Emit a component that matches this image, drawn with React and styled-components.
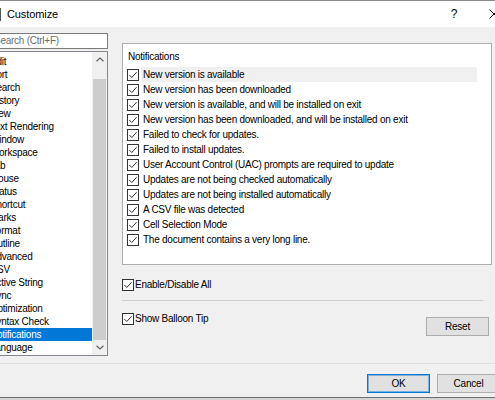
import styled, { createGlobalStyle } from "styled-components";
import React from "react";

const UI_FONT = `"Liberation Sans", Arial, sans-serif`;

const GlobalStyle = createGlobalStyle`
  html, body {
    margin: 0;
    padding: 0;
    background: #d4d4d4;
  }
`;

const Page = styled.div`
  width: 495px;
  height: 400px;
  overflow: hidden;
  font-family: ${UI_FONT};
  font-size: 10px;
  letter-spacing: -0.25px;
  color: #000;
`;

const Window = styled.div`
  width: 534px;
  margin-left: -20px;
  background: #f0f0f0;
  border-top: 1px solid #8c8c8c;
  border-bottom: 1px solid #6e6e6e;
  display: flex;
  flex-direction: column;
`;

const TitleBar = styled.div`
  height: 26px;
  background: #fff;
  display: flex;
  align-items: center;
  padding-left: 9px;
`;

const AppIcon = styled.svg`
  width: 12px;
  height: 13px;
  flex: none;
`;

const Title = styled.span`
  margin-left: 6px;
  font-size: 11px;
  letter-spacing: -0.1px;
  flex: 1;
`;

const CaptionButton = styled.div`
  width: 40px;
  height: 26px;
  display: flex;
  align-items: center;
  justify-content: center;
  font-size: 12px;
`;

const Body = styled.div`
  height: 336px;
  display: flex;
  padding: 6px 0 0 7px;
  box-sizing: border-box;
  gap: 14px;
`;

const LeftColumn = styled.div`
  width: 121px;
  display: flex;
  flex-direction: column;
  gap: 2px;
`;

const SearchBox = styled.div`
  height: 16px;
  box-sizing: border-box;
  border: 1px solid #7a7a7a;
  background: #fff;
  color: #6d6d6d;
  padding-left: 6px;
  line-height: 14px;
  white-space: nowrap;
`;

const ListBox = styled.div`
  height: 305px;
  box-sizing: border-box;
  border: 1px solid #828790;
  background: #fff;
  display: flex;
`;

const Items = styled.div`
  flex: 1;
  padding-top: 3px;
`;

const Item = styled.div`
  height: 13px;
  line-height: 13px;
  padding-left: 2px;
  white-space: nowrap;
  background: ${(p) => (p.$selected ? "#0078d7" : "transparent")};
  color: ${(p) => (p.$selected ? "#fff" : "#000")};
`;

const ScrollBar = styled.div`
  width: 15px;
  background: #f0f0f0;
  display: flex;
  flex-direction: column;
`;

const ScrollArrow = styled.div`
  height: 15px;
  display: flex;
  align-items: center;
  justify-content: center;
`;

const ScrollTrack = styled.div`
  flex: 1;
  padding: 12px 1px 0;
  display: flex;
`;

const Thumb = styled.div`
  flex: 1;
  background: #cdcdcd;
`;

const RightColumn = styled.div`
  width: 370px;
  padding-top: 10px;
  display: flex;
  flex-direction: column;
`;

const CheckPanel = styled.div`
  height: 222px;
  box-sizing: border-box;
  border: 1px solid #adadad;
  background: #fff;
  padding: 6px 14px 0 4px;
`;

const PanelLabel = styled.div`
  line-height: 14px;
  padding-left: 1px;
  margin-bottom: 3px;
`;

const CheckRow = styled.div`
  height: 15px;
  display: flex;
  align-items: center;
  gap: ${(p) => (p.$gap ? `${p.$gap}px` : "2px")};
  margin-top: ${(p) => (p.$top ? `${p.$top}px` : "0")};
`;

const RowText = styled.span`
  flex: 1;
  height: 15px;
  line-height: 15px;
  padding-left: 2px;
  white-space: nowrap;
  background: ${(p) => (p.$active ? "#f0f0f0" : "transparent")};
`;

const Separator = styled.div`
  width: 361px;
  border-top: 1px solid #cfcfcf;
  margin-top: ${(p) => p.$top}px;
`;

const OptionsRow = styled.div`
  display: flex;
  justify-content: space-between;
  align-items: flex-start;
  margin-top: 10px;
`;

const Button = styled.button`
  font-family: ${UI_FONT};
  font-size: 10px;
  letter-spacing: -0.2px;
  width: 63px;
  height: 19px;
  padding: 0;
  background: #e1e1e1;
  border: 1px solid ${(p) => (p.$default ? "#0078d7" : "#adadad")};
  box-shadow: ${(p) => (p.$default ? "inset 0 0 0 1px rgba(0,120,215,0.45)" : "none")};
  color: #000;
`;

const ResetButton = styled(Button)`
  margin-top: 6px;
  margin-right: 3px;
`;

const Footer = styled.div`
  height: 34px;
  box-sizing: border-box;
  border-top: 1px solid #dfdfdf;
  display: flex;
  justify-content: flex-end;
  align-items: flex-start;
  gap: 7px;
  padding: 10px 14px 0 0;
`;

const Check = () => (
  <svg width="12" height="12" viewBox="0 0 12 12" style={{ flex: "none" }}>
    <rect x="0.5" y="0.5" width="11" height="11" fill="#fff" stroke="#333" />
    <polyline points="2.3,6 4.8,8.5 9.6,3.2" fill="none" stroke="#333" strokeWidth="1" />
  </svg>
);

const Chevron = ({ down }) => (
  <svg width="8" height="5" viewBox="0 0 8 5">
    <polyline
      points={down ? "0.5,0.8 4,4 7.5,0.8" : "0.5,4.2 4,1 7.5,4.2"}
      fill="none"
      stroke="#606060"
      strokeWidth="1.2"
    />
  </svg>
);

const categories = [
  "Edit", "Sort", "Search", "History", "View", "Text Rendering", "Window",
  "Workspace", "Tab", "Mouse", "Status", "Shortcut", "Marks", "Format",
  "Outline", "Advanced", "CSV", "Active String", "Sync", "Optimization",
  "Syntax Check", "Notifications", "Language",
];

const notifications = [
  "New version is available",
  "New version has been downloaded",
  "New version is available, and will be installed on exit",
  "New version has been downloaded, and will be installed on exit",
  "Failed to check for updates.",
  "Failed to install updates.",
  "User Account Control (UAC) prompts are required to update",
  "Updates are not being checked automatically",
  "Updates are not being installed automatically",
  "A CSV file was detected",
  "Cell Selection Mode",
  "The document contains a very long line.",
];

function App() {
  return (
    <Page>
      <GlobalStyle />
      <Window>
        <TitleBar>
          <AppIcon viewBox="0 0 12 13">
            <rect x="0.5" y="0.5" width="11" height="12" fill="#fff" stroke="#555" />
            <rect x="2" y="2" width="8" height="2" fill="#555" />
          </AppIcon>
          <Title>Customize</Title>
          <CaptionButton>?</CaptionButton>
          <CaptionButton>
            <svg width="10" height="10" viewBox="0 0 10 10">
              <path d="M0.5 0.5 L9.5 9.5 M9.5 0.5 L0.5 9.5" stroke="#000" strokeWidth="1" />
            </svg>
          </CaptionButton>
        </TitleBar>

        <Body>
          <LeftColumn>
            <SearchBox>Search (Ctrl+F)</SearchBox>
            <ListBox>
              <Items>
                {categories.map((c) => (
                  <Item key={c} $selected={c === "Notifications"}>
                    {c}
                  </Item>
                ))}
              </Items>
              <ScrollBar>
                <ScrollArrow>
                  <Chevron />
                </ScrollArrow>
                <ScrollTrack>
                  <Thumb />
                </ScrollTrack>
                <ScrollArrow>
                  <Chevron down />
                </ScrollArrow>
              </ScrollBar>
            </ListBox>
          </LeftColumn>

          <RightColumn>
            <CheckPanel>
              <PanelLabel>Notifications</PanelLabel>
              {notifications.map((n, i) => (
                <CheckRow key={n}>
                  <Check />
                  <RowText $active={i === 0}>{n}</RowText>
                </CheckRow>
              ))}
            </CheckPanel>

            <CheckRow $gap={1} $top={12}>
              <Check />
              <span>Enable/Disable All</span>
            </CheckRow>

            <Separator $top={8} />

            <OptionsRow>
              <CheckRow $gap={1}>
                <Check />
                <span>Show Balloon Tip</span>
              </CheckRow>
              <ResetButton>Reset</ResetButton>
            </OptionsRow>
          </RightColumn>
        </Body>

        <Footer>
          <Button $default>OK</Button>
          <Button>Cancel</Button>
        </Footer>
      </Window>
    </Page>
  );
}

export default App;
